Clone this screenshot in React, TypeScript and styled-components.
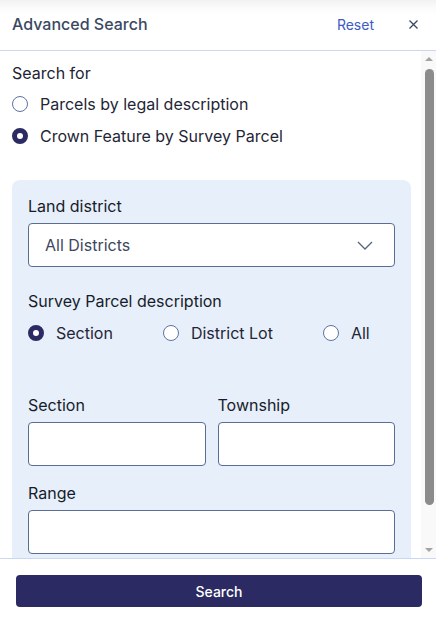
import styled, { createGlobalStyle } from "styled-components";

const GlobalStyle = createGlobalStyle`
  html, body {
    margin: 0;
    padding: 0;
    background: #ffffff;
  }
  body {
    font-family: Inter, "Noto Sans", "Liberation Sans", sans-serif;
    color: #1f2637;
  }
  * {
    box-sizing: border-box;
  }
`;

const Panel = styled.div`
  display: flex;
  flex-direction: column;
  width: 436px;
  height: 623px;
  background: #ffffff;
`;

const Header = styled.div`
  display: flex;
  align-items: center;
  height: 51px;
  padding: 0 12px 2px 12px;
  border-bottom: 1px solid #c7d7f4;
  background: linear-gradient(#f2f2f2 0px, #fbfbfb 8px, #ffffff 16px);
  flex-shrink: 0;
`;

const Title = styled.h2`
  margin: 0;
  flex: 1;
  font-size: 16px;
  font-weight: 500;
  color: #3a4862;
`;

const LinkButton = styled.button`
  border: none;
  background: none;
  padding: 0;
  font-family: inherit;
  font-size: 14px;
  color: #3b5cc6;
  cursor: pointer;
`;

const CloseButton = styled.button`
  display: flex;
  align-items: center;
  justify-content: center;
  width: 16px;
  height: 16px;
  margin-left: 31px;
  margin-right: 3px;
  border: none;
  background: none;
  padding: 0;
  cursor: pointer;
`;

const Body = styled.div`
  flex: 1;
  min-height: 0;
  display: flex;
`;

const Scroller = styled.div`
  flex: 1;
  min-width: 0;
  overflow: hidden;
  padding: 11px 10px 27px 12px;
`;

/* classic scrollbar: arrow buttons, thumb at the top of the track */
const Track = styled.div`
  width: 15px;
  flex-shrink: 0;
  display: flex;
  flex-direction: column;
  align-items: center;
  background: #f9f9f9;
`;

const Arrow = styled.div<{ $down?: boolean }>`
  width: 15px;
  height: 16px;
  flex-shrink: 0;
  display: flex;
  align-items: center;
  justify-content: center;

  &::after {
    content: "";
    width: 0;
    height: 0;
    border-left: 4px solid transparent;
    border-right: 4px solid transparent;
    ${({ $down }) =>
      $down ? "border-top: 4px solid #a3a3a3;" : "border-bottom: 4px solid #a3a3a3;"}
    margin-left: 1px;
  }
`;

const Thumb = styled.div`
  width: 9px;
  height: 436px;
  margin: 2px 0 0 2px;
  border-radius: 5px;
  background: #8b8b8b;
`;

const TrackRest = styled.div`
  flex: 1;
`;

const GroupTitle = styled.div`
  font-size: 16px;
  line-height: 22px;
  color: #1d2333;
  margin-bottom: 8px;
`;

const RadioList = styled.div<{ $row?: boolean }>`
  display: flex;
  flex-direction: ${({ $row }) => ($row ? "row" : "column")};
  gap: ${({ $row }) => ($row ? "50px" : "8px")};
  margin-top: ${({ $row }) => ($row ? "10px" : "0")};
`;

const RadioRow = styled.label`
  display: flex;
  align-items: center;
  gap: 12px;
  height: 24px;
  font-size: 16px;
  color: #1f2637;
  cursor: pointer;
`;

const RadioDot = styled.span<{ $checked?: boolean }>`
  width: 16px;
  height: 16px;
  border-radius: 50%;
  flex-shrink: 0;
  border: ${({ $checked }) => ($checked ? "5px solid #2b2a63" : "1px solid #5b72a3")};
  background: #ffffff;
`;

const Criteria = styled.div`
  margin-top: 32px;
  padding: 16px 16px 24px 16px;
  background: #e7effa;
  border-radius: 8px;
`;

const FieldLabel = styled.div`
  font-size: 16px;
  line-height: 20px;
  color: #161c2b;
  margin-bottom: 7px;
`;

const Field = styled.div<{ $gap?: number }>`
  margin-top: ${({ $gap }) => $gap ?? 0}px;
`;

const Select = styled.div`
  display: flex;
  align-items: center;
  justify-content: space-between;
  height: 44px;
  padding: 0 21px 0 16px;
  background: #ffffff;
  border: 1px solid #5a6d95;
  border-radius: 4px;
  font-size: 16px;
  color: #3b4760;
`;

const TextInput = styled.input`
  display: block;
  width: 100%;
  height: 44px;
  padding: 0 12px;
  border: 1px solid #5a6d95;
  border-radius: 4px;
  background: #ffffff;
  font-family: inherit;
  font-size: 16px;
  outline: none;
`;

const Pair = styled.div`
  display: grid;
  grid-template-columns: 1fr 1fr;
  gap: 12px;
  margin-top: 50px;
`;

const Footer = styled.div`
  flex-shrink: 0;
  padding: 16px 14px 16px 16px;
  border-top: 1px solid #c7d7f4;
`;

const SubmitButton = styled.button`
  display: block;
  width: 100%;
  height: 32px;
  border: none;
  border-radius: 4px;
  background: #2b2a63;
  color: #ffffff;
  font-family: inherit;
  font-size: 14px;
  font-weight: 500;
  cursor: pointer;
`;

const Radio = ({ label, checked }: { label: string; checked?: boolean }) => (
  <RadioRow>
    <RadioDot $checked={checked} />
    {label}
  </RadioRow>
);

export default function App() {
  return (
    <>
      <GlobalStyle />
      <Panel>
        <Header>
          <Title>Advanced Search</Title>
          <LinkButton>Reset</LinkButton>
          <CloseButton aria-label="Close">
            <svg width="9" height="9" viewBox="0 0 9 9">
              <path d="M0.5 0.5L8.5 8.5M8.5 0.5L0.5 8.5" stroke="#3a4862" strokeWidth="1.3" />
            </svg>
          </CloseButton>
        </Header>

        <Body>
          <Scroller>
            <GroupTitle>Search for</GroupTitle>
            <RadioList>
              <Radio label="Parcels by legal description" />
              <Radio label="Crown Feature by Survey Parcel" checked />
            </RadioList>

            <Criteria>
              <FieldLabel>Land district</FieldLabel>
              <Select>
                All Districts
                <svg width="16" height="9" viewBox="0 0 16 9">
                  <path d="M1 1L8 8L15 1" fill="none" stroke="#56637e" strokeWidth="1.3" />
                </svg>
              </Select>

              <Field $gap={24}>
                <FieldLabel>Survey Parcel description</FieldLabel>
                <RadioList $row>
                  <Radio label="Section" checked />
                  <Radio label="District Lot" />
                  <Radio label="All" />
                </RadioList>
              </Field>

              <Pair>
                <div>
                  <FieldLabel>Section</FieldLabel>
                  <TextInput />
                </div>
                <div>
                  <FieldLabel>Township</FieldLabel>
                  <TextInput />
                </div>
              </Pair>

              <Field $gap={17}>
                <FieldLabel>Range</FieldLabel>
                <TextInput />
              </Field>
            </Criteria>
          </Scroller>
          <Track>
            <Arrow />
            <Thumb />
            <TrackRest />
            <Arrow $down />
          </Track>
        </Body>

        <Footer>
          <SubmitButton>Search</SubmitButton>
        </Footer>
      </Panel>
    </>
  );
}
